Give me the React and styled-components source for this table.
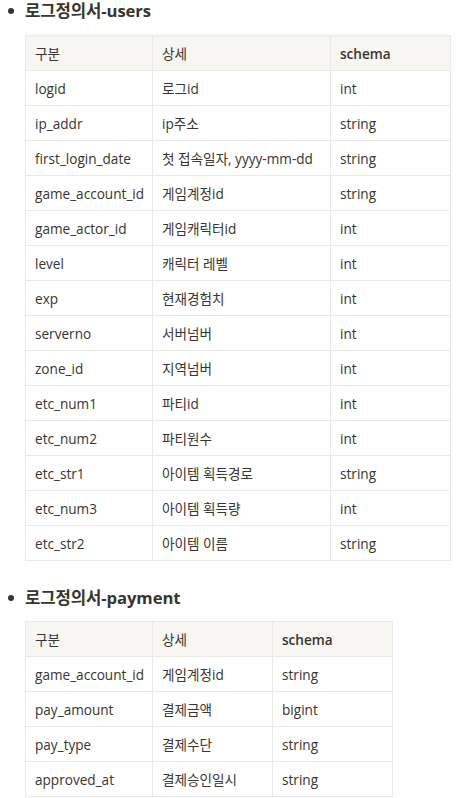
import styled, { createGlobalStyle } from "styled-components";

const GlobalStyle = createGlobalStyle`
  body {
    margin: 0;
    background: #fff;
    font-family: "Open Sans", "Noto Sans CJK KR", sans-serif;
    color: #37352f;
  }
  * { box-sizing: border-box; }
`;

const Page = styled.div`
  padding-top: 0;
`;

const Section = styled.section`
  display: flex;
  flex-direction: column;
`;

const Heading = styled.div`
  display: flex;
  align-items: center;
  height: 24px;
  line-height: 24px;
  margin-top: ${(p) => p.top}px;
  font-size: 16.7px;
  font-weight: 700;
  letter-spacing: -0.1px;
`;

const Bullet = styled.span`
  width: 6px;
  height: 6px;
  border-radius: 50%;
  background: #37352f;
  margin: 0 11px 0 8px;
`;

const Table = styled.table`
  width: ${(p) => p.width}px;
  margin: ${(p) => p.top}px 0 0 25px;
  border-collapse: collapse;
  font-size: 13.6px;
  table-layout: fixed;
`;

const Cell = styled.td`
  height: 35px;
  padding: 0 9px;
  border: 1px solid #e9e9e7;
  white-space: nowrap;
  overflow: hidden;
  vertical-align: middle;
  background: ${(p) => (p.head ? "#f7f6f3" : "#fff")};
  font-weight: ${(p) => (p.bold ? 600 : 400)};
  color: #37352f;
`;

const usersRows = [
  ["logid", "로그id", "int"],
  ["ip_addr", "ip주소", "string"],
  ["first_login_date", "첫 접속일자, yyyy-mm-dd", "string"],
  ["game_account_id", "게임계정id", "string"],
  ["game_actor_id", "게임캐릭터id", "int"],
  ["level", "캐릭터 레벨", "int"],
  ["exp", "현재경험치", "int"],
  ["serverno", "서버넘버", "int"],
  ["zone_id", "지역넘버", "int"],
  ["etc_num1", "파티id", "int"],
  ["etc_num2", "파티원수", "int"],
  ["etc_str1", "아이템 획득경로", "string"],
  ["etc_num3", "아이템 획득량", "int"],
  ["etc_str2", "아이템 이름", "string"],
];

const paymentRows = [
  ["game_account_id", "게임계정id", "string"],
  ["pay_amount", "결제금액", "bigint"],
  ["pay_type", "결제수단", "string"],
  ["approved_at", "결제승인일시", "string"],
];

const LogTable = ({ widths, rows, top }) => (
  <Table top={top} width={widths.reduce((a, b) => a + b, 0)}>
    <colgroup>
      {widths.map((w, i) => (
        <col key={i} style={{ width: w }} />
      ))}
    </colgroup>
    <tbody>
      <tr>
        <Cell head>구분</Cell>
        <Cell head>상세</Cell>
        <Cell head bold>
          schema
        </Cell>
      </tr>
      {rows.map((r) => (
        <tr key={r[0]}>
          {r.map((c, i) => (
            <Cell key={i}>{c}</Cell>
          ))}
        </tr>
      ))}
    </tbody>
  </Table>
);

const App = () => (
  <Page>
    <GlobalStyle />
    <Section>
      <Heading top={-1}>
        <Bullet />
        로그정의서-users
      </Heading>
      <LogTable widths={[127, 178, 120]} rows={usersRows} top={12} />
    </Section>
    <Section>
      <Heading top={25}>
        <Bullet />
        로그정의서-payment
      </Heading>
      <LogTable widths={[127, 120, 120]} rows={paymentRows} top={11} />
    </Section>
  </Page>
);

export default App;
